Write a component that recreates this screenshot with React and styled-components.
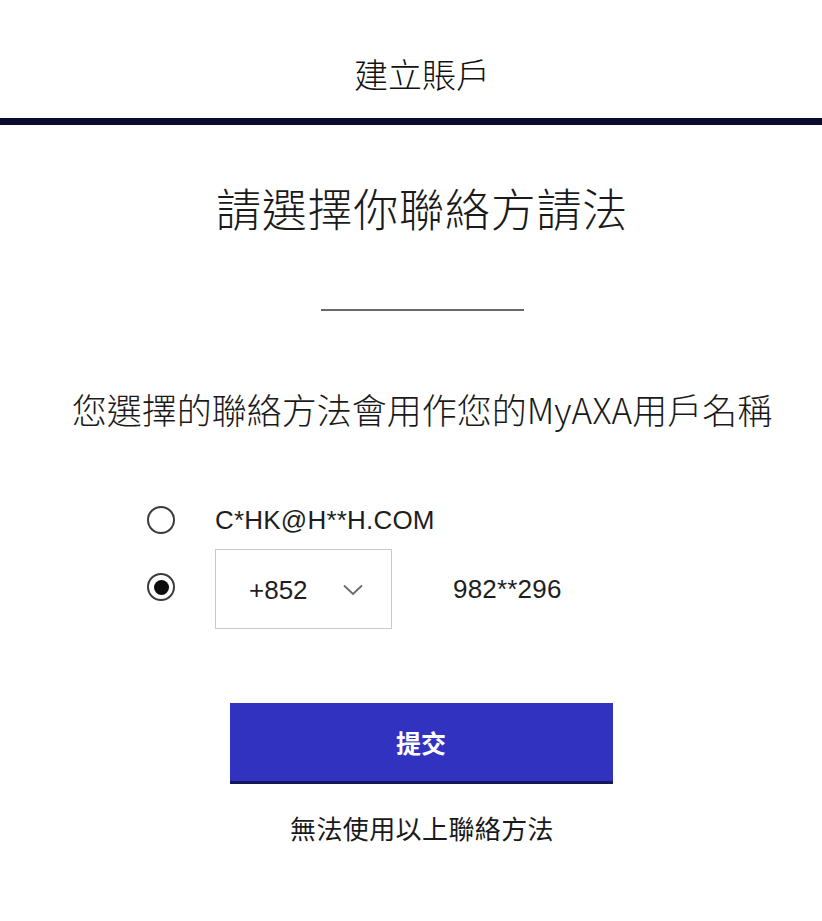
import React, { useState } from "react";
import styled, { createGlobalStyle } from "styled-components";

const GlobalStyle = createGlobalStyle`
  html, body { margin: 0; padding: 0; background: #ffffff; }
  body {
    font-family: "Liberation Sans", "Noto Sans CJK TC", sans-serif;
    color: #1c1c1c;
  }
`;

const Page = styled.div`
  width: 822px;
  min-height: 921px;
  background: #fff;
  display: flex;
  flex-direction: column;
`;

const Header = styled.header`
  height: 118px;
  box-sizing: border-box;
  padding: 53px 0 0 22px;
  display: flex;
  justify-content: center;
  align-items: flex-start;
`;

const HeaderTitle = styled.h1`
  margin: 0;
  font-family: "Noto Sans CJK TC", sans-serif;
  font-weight: 300;
  font-size: 34px;
  line-height: 42px;
  color: #111;
`;

const Bar = styled.div`
  height: 7px;
  background: #0b0b2e;
`;

const Content = styled.main`
  display: flex;
  flex-direction: column;
  align-items: center;
  padding-left: 22px;
`;

const Heading = styled.h2`
  margin: 56px 0 0;
  font-family: "Noto Sans CJK TC", sans-serif;
  font-weight: 300;
  font-size: 45px;
  line-height: 54px;
  letter-spacing: 0.8px;
  color: #1a1a1a;
`;

const Divider = styled.hr`
  margin: 74px 0 0;
  width: 203px;
  height: 2px;
  border: 0;
  background: #6a6a6a;
`;

const Sub = styled.p`
  margin: 77px 0 0;
  font-family: "Noto Sans CJK TC", sans-serif;
  font-weight: 300;
  font-size: 35px;
  line-height: 42px;
  color: #1a1a1a;
  white-space: nowrap;
`;

const Options = styled.div`
  align-self: flex-start;
  margin: 74px 0 0 125px;
  display: flex;
  flex-direction: column;
  gap: 13px;
`;

const OptionRow = styled.label`
  display: flex;
  align-items: center;
  gap: 40px;
  min-height: 32px;
  cursor: pointer;
`;

const Radio = styled.span`
  width: 28px;
  height: 28px;
  box-sizing: border-box;
  border-radius: 50%;
  border: 2px solid #3c3c3c;
  display: flex;
  align-items: center;
  justify-content: center;
  flex: none;
  margin-top: ${(p) => (p.$offset ? "-4px" : "0")};
  &::after {
    content: "";
    width: 15px;
    height: 15px;
    border-radius: 50%;
    background: #0d0d0d;
    display: ${(p) => (p.$checked ? "block" : "none")};
  }
`;

const OptionText = styled.span`
  font-family: "Liberation Sans", sans-serif;
  font-size: 26px;
  color: #1e1e1e;
  letter-spacing: 0.2px;
`;

const Select = styled.div`
  width: 177px;
  height: 80px;
  box-sizing: border-box;
  border: 1px solid #c9c9c9;
  display: flex;
  align-items: center;
  padding: 2px 28px 0 33px;
  justify-content: space-between;
  margin-right: 61px;
`;

const SelectValue = styled.span`
  font-family: "Liberation Sans", sans-serif;
  font-size: 26px;
  color: #1e1e1e;
`;

const PhoneGroup = styled.div`
  display: flex;
  align-items: center;
`;

const Button = styled.button`
  margin-top: 74px;
  width: 383px;
  height: 81px;
  box-sizing: border-box;
  border: 0;
  border-bottom: 3px solid #17175c;
  background: #3232c0;
  color: #fff;
  font-family: "Noto Sans CJK TC", sans-serif;
  font-weight: 700;
  font-size: 25px;
  cursor: pointer;
  padding: 0;
  transform: translateX(-1px);
`;

const Link = styled.a`
  margin-top: 28px;
  font-family: "Noto Sans CJK TC", sans-serif;
  font-weight: 400;
  font-size: 26px;
  line-height: 31px;
  color: #1a1a1a;
  text-decoration: none;
  letter-spacing: 0.4px;
`;

const Chevron = () => (
  <svg width="20" height="12" viewBox="0 0 20 12" fill="none">
    <path d="M1 1.5 L10 10 L19 1.5" stroke="#6a6a6a" strokeWidth="1.8" />
  </svg>
);

export default function App() {
  const [choice, setChoice] = useState("phone");
  return (
    <>
      <GlobalStyle />
      <Page>
        <Header>
          <HeaderTitle>建立賬戶</HeaderTitle>
        </Header>
        <Bar />
        <Content>
          <Heading>請選擇你聯絡方請法</Heading>
          <Divider />
          <Sub>您選擇的聯絡方法會用作您的MyAXA用戶名稱</Sub>
          <Options>
            <OptionRow onClick={() => setChoice("email")}>
              <Radio $checked={choice === "email"} />
              <OptionText>C*HK@H**H.COM</OptionText>
            </OptionRow>
            <OptionRow onClick={() => setChoice("phone")}>
              <Radio $checked={choice === "phone"} $offset />
              <PhoneGroup>
                <Select>
                  <SelectValue>+852</SelectValue>
                  <Chevron />
                </Select>
                <OptionText>982**296</OptionText>
              </PhoneGroup>
            </OptionRow>
          </Options>
          <Button>提交</Button>
          <Link href="#">無法使用以上聯絡方法</Link>
        </Content>
      </Page>
    </>
  );
}
